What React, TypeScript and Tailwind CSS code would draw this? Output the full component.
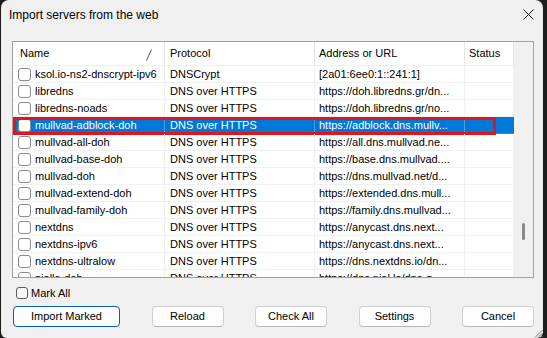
const rows = [
  { name: "ksol.io-ns2-dnscrypt-ipv6", proto: "DNSCrypt", url: "[2a01:6ee0:1::241:1]" },
  { name: "libredns", proto: "DNS over HTTPS", url: "https://doh.libredns.gr/dn..." },
  { name: "libredns-noads", proto: "DNS over HTTPS", url: "https://doh.libredns.gr/no..." },
  { name: "mullvad-adblock-doh", proto: "DNS over HTTPS", url: "https://adblock.dns.mullv...", selected: true },
  { name: "mullvad-all-doh", proto: "DNS over HTTPS", url: "https://all.dns.mullvad.ne..." },
  { name: "mullvad-base-doh", proto: "DNS over HTTPS", url: "https://base.dns.mullvad...." },
  { name: "mullvad-doh", proto: "DNS over HTTPS", url: "https://dns.mullvad.net/d..." },
  { name: "mullvad-extend-doh", proto: "DNS over HTTPS", url: "https://extended.dns.mull..." },
  { name: "mullvad-family-doh", proto: "DNS over HTTPS", url: "https://family.dns.mullvad..." },
  { name: "nextdns", proto: "DNS over HTTPS", url: "https://anycast.dns.next..." },
  { name: "nextdns-ipv6", proto: "DNS over HTTPS", url: "https://anycast.dns.next..." },
  { name: "nextdns-ultralow", proto: "DNS over HTTPS", url: "https://dns.nextdns.io/dn..." },
  { name: "njalla-doh", proto: "DNS over HTTPS", url: "https://dns.njal.la/dns-q..." },
];

const buttons = ["Import Marked", "Reload", "Check All", "Settings", "Cancel"];

const Checkbox = ({ className = "" }: { className?: string }) => (
  <span
    className={`block w-[13px] h-[13px] rounded-[3px] border border-[#8a8a8a] bg-white shrink-0 ${className}`}
  />
);

export default function App() {
  return (
    <div
      className="w-[547px] h-[338px] bg-[#1e1e1e] overflow-hidden flex"
      style={{ fontFamily: '"Liberation Sans", Arial, sans-serif' }}
    >
      {/* Dialog window */}
      <div className="relative ml-px w-[542px] h-[338px] bg-[#f0f0f0] rounded-t-[8px] rounded-b-[6px] flex flex-col text-black">
        {/* Title bar */}
        <div className="h-[29px] flex items-center justify-between pl-[8px] pr-[8px]">
          <span className="text-[12px] leading-none">Import servers from the web</span>
          <svg width="11" height="11" viewBox="0 0 11 11" className="mr-[1px]">
            <path d="M0.5 0.5 L10.5 10.5 M10.5 0.5 L0.5 10.5" stroke="#1a1a1a" strokeWidth="1" />
          </svg>
        </div>

        {/* List view */}
        <div className="mt-[12px] ml-[11px] w-[522px] h-[237px] border border-[#a0a0a0] bg-white overflow-hidden flex text-[11px] leading-none">
          <div className="w-[501px] shrink-0">
            {/* Header */}
            <div className="h-[24px] flex border-b border-[#f0f0f0]">
              <div className="relative w-[152px] border-r border-[#e5e5e5] flex items-center pl-[7px]">
                Name
                <svg width="6" height="12" viewBox="0 0 6 12" className="absolute left-[133px] top-[7px]">
                  <path d="M0.5 11.5 L5.5 0.5" stroke="#555" strokeWidth="1" />
                </svg>
              </div>
              <div className="w-[150px] border-r border-[#e5e5e5] flex items-center pl-[5px]">Protocol</div>
              <div className="w-[150px] border-r border-[#e5e5e5] flex items-center pl-[4px]">Address or URL</div>
              <div className="w-[49px] border-r border-[#e5e5e5] flex items-center pl-[4px]">Status</div>
            </div>

            {/* Rows */}
            {rows.map((r) => (
              <div
                key={r.name}
                className={`relative h-[17px] flex border-b ${
                  r.selected ? "bg-[#0078d7] text-white border-[#2b8be0]" : "border-[#f0f0f0]"
                }`}
              >
                <div
                  className={`w-[152px] border-r flex items-center pl-[5px] gap-[4px] whitespace-nowrap overflow-hidden ${
                    r.selected ? "border-[#4a9be3]" : "border-[#f0f0f0]"
                  }`}
                >
                  <Checkbox />
                  <span>{r.name}</span>
                </div>
                <div
                  className={`w-[150px] border-r flex items-center pl-[5px] whitespace-nowrap overflow-hidden ${
                    r.selected ? "border-[#4a9be3]" : "border-[#f0f0f0]"
                  }`}
                >
                  {r.proto}
                </div>
                <div
                  className={`w-[150px] border-r flex items-center pl-[4px] whitespace-nowrap overflow-hidden ${
                    r.selected ? "border-[#4a9be3]" : "border-[#f0f0f0]"
                  }`}
                >
                  {r.url}
                </div>
                <div className={`w-[49px] border-r ${r.selected ? "border-[#0078d7]" : "border-[#f0f0f0]"}`} />
                {r.selected && (
                  <div className="absolute left-0 top-0 w-[483px] h-[18px] border-[3px] border-[#e3141b]" />
                )}
              </div>
            ))}
          </div>

          {/* Scrollbar */}
          <div className="relative flex-1 bg-[#f0f0f0]">
            <div className="absolute left-[8px] top-[181px] w-[3px] h-[17px] rounded-full bg-[#8a8a8a]" />
          </div>
        </div>

        {/* Mark all */}
        <div className="mt-[9px] ml-[15px] h-[12px] flex items-center gap-[3px] text-[11px]">
          <span className="block w-[12px] h-[12px] rounded-[3px] border border-[#5c5c5c] bg-[#f7f7f7]" />
          <span>Mark All</span>
        </div>

        {/* Buttons */}
        <div className="mt-[7px] ml-[12px] w-[521px] flex justify-between text-[11px]">
          {buttons.map((b, i) => (
            <button
              key={b}
              className={`h-[21px] rounded-[4px] border bg-[#fdfdfd] flex items-center justify-center ${
                i === 0 ? "w-[107px] border-[#005fb8]" : "w-[72px] border-[#d0d0d0] border-b-[#b8b8b8]"
              }`}
            >
              {b}
            </button>
          ))}
        </div>

        {/* Resize grip */}
        <svg width="9" height="9" viewBox="0 0 9 9" className="absolute right-0 bottom-0">
          <path d="M8.5 1 L1 8.5 M8.5 4 L4 8.5 M8.5 7 L7 8.5" stroke="#7a7a7a" strokeWidth="1" />
        </svg>
      </div>
    </div>
  );
}
